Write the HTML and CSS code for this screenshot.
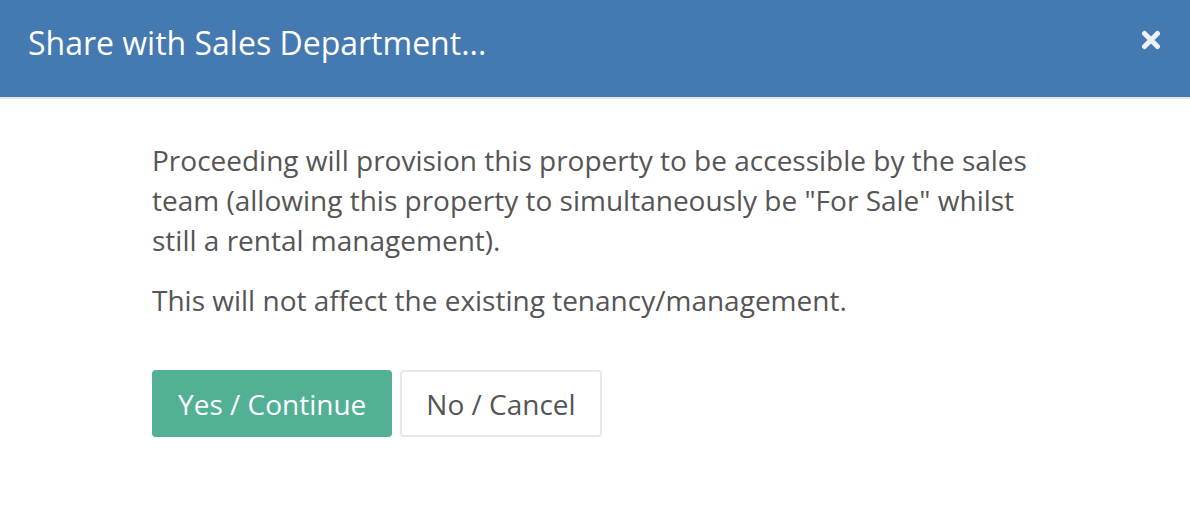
FILE: index.html
```html
<!DOCTYPE html>
<html lang="en">
<head>
  <meta charset="UTF-8">
  <title>Share with Sales Department</title>
  <link rel="stylesheet" href="styles.css">
</head>
<body>
  <div class="modal">
    <!-- Header -->
    <div class="modal-header">
      <h4 class="modal-title">Share with Sales Department...</h4>
      <button type="button" class="close" aria-label="Close">
        <svg viewBox="0 0 20 20" width="20" height="20">
          <path d="M3.5 3.5 L16.5 16.5 M16.5 3.5 L3.5 16.5" stroke="#eef2f8" stroke-width="5" stroke-linecap="round"/>
        </svg>
      </button>
    </div>

    <div class="modal-body">
      <p>Proceeding will provision this property to be accessible by the sales team (allowing this property to simultaneously be "For Sale" whilst still a rental management).</p>
      <p>This will not affect the existing tenancy/management.</p>

      <div class="actions">
        <button type="button" class="btn btn-success">Yes / Continue</button>
        <button type="button" class="btn btn-default">No / Cancel</button>
      </div>
    </div>
  </div>
</body>
</html>
```

FILE: styles.css
```css
body {
  margin: 0;
  background: #fff;
  font-family: 'Open Sans', sans-serif;
  color: #555;
}
.modal {
  width: 1190px;
}
.modal-header {
  background: #4479b1;
  height: 97px;
  border-bottom: 2px solid #e5e5e5;
  display: flex;
  align-items: flex-start;
  justify-content: space-between;
  padding: 0 29px 0 28px;
  box-sizing: content-box;
}
.modal-title {
  margin: 21px 0 0;
  color: #fff;
  font-size: 32px;
  line-height: 44px;
  font-weight: 400;
}
.close {
  background: none;
  border: none;
  padding: 0;
  margin-top: 30px;
  cursor: pointer;
  display: flex;
}
.modal-body {
  padding: 41px 152px;
}
.modal-body p {
  margin: 0 0 20px;
  font-size: 28px;
  line-height: 40px;
}
.actions {
  display: flex;
  gap: 8px;
  margin-top: 50px;
}
.btn {
  font-family: 'Open Sans', sans-serif;
  font-size: 28px;
  height: 67px;
  padding: 0 24px;
  border-radius: 4px;
  cursor: pointer;
}
.btn-success {
  background: #52b094;
  border: 2px solid #52b094;
  color: #fff;
}
.btn-default {
  background: #fff;
  border: 2px solid #e8e8e8;
  color: #555;
}
```
